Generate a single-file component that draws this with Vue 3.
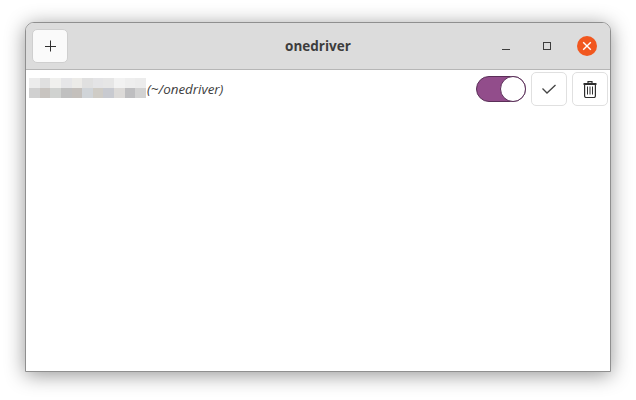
<script setup>
// 打码的账号名，两行色块
const blurTop = ['#ececec', '#e0e0e0', '#f0f0ee', '#e6e6e8', '#ecebe8', '#e0e0e0', '#e4e4e6', '#e6e6e6', '#f2f2f2', '#eeeeee', '#ececec']
const blurBottom = ['#d0d0d0', '#c8c4c0', '#d0d2d0', '#c0c0c0', '#c4c0bc', '#d0d4d8', '#cfccc6', '#c8cad0', '#dcdad8', '#bebec0', '#d2d2d2']
</script>

<template>
  <div class="desktop">
    <div class="window">
      <header class="titlebar">
        <div class="start">
          <button class="btn add-btn" aria-label="Add">
            <svg width="16" height="16" viewBox="0 0 16 16">
              <path d="M8.5 2.5v11M3 8.5h11" stroke="#2e2e2e" stroke-width="1" fill="none" />
            </svg>
          </button>
        </div>
        <div class="title">onedriver</div>
        <div class="controls">
          <span class="ctl">
            <svg width="10" height="10" viewBox="0 0 10 10"><path d="M1 8.5h8" stroke="#3d3d3d" stroke-width="1" /></svg>
          </span>
          <span class="ctl">
            <svg width="10" height="10" viewBox="0 0 10 10"><rect x="1.5" y="1.5" width="7" height="7" fill="none" stroke="#3d3d3d" stroke-width="1" /></svg>
          </span>
          <span class="close">
            <svg width="10" height="10" viewBox="0 0 10 10"><path d="M1.2 1.2l7.6 7.6M8.8 1.2l-7.6 7.6" stroke="#fff" stroke-width="1.4" /></svg>
          </span>
        </div>
      </header>

      <div class="content">
        <div class="row">
          <div class="account">
            <div class="blur">
              <i v-for="(c, i) in blurTop" :key="'t' + i" :style="{ background: c }"></i>
              <i v-for="(c, i) in blurBottom" :key="'b' + i" :style="{ background: c }"></i>
            </div>
            <em class="path">(~/onedriver)</em>
          </div>
          <div class="actions">
            <div class="switch"><span class="knob"></span></div>
            <button class="btn row-btn" aria-label="Mount">
              <svg width="16" height="16" viewBox="0 0 16 16">
                <path d="M1.5 7.5l4.5 4.5 8.5-8" stroke="#444" stroke-width="1.3" fill="none" />
              </svg>
            </button>
            <button class="btn row-btn" aria-label="Delete">
              <svg width="14" height="17" viewBox="0 0 14 17">
                <path d="M5 2.5V0.7h4v1.8" stroke="#2e2e2e" stroke-width="1.2" fill="none" />
                <path d="M0.5 3h13" stroke="#2e2e2e" stroke-width="2" />
                <path d="M1.6 3V15a1.5 1.5 0 0 0 1.5 1.5h7.8a1.5 1.5 0 0 0 1.5-1.5V3" stroke="#2e2e2e" stroke-width="1.2" fill="none" />
                <path d="M4.5 5.5v8M7 5.5v8M9.5 5.5v8" stroke="#2e2e2e" stroke-width="1" />
              </svg>
            </button>
          </div>
        </div>
      </div>
    </div>
  </div>
</template>

<style>
html, body {
  margin: 0;
  background: #fff;
}
</style>

<style scoped>
.desktop {
  width: 636px;
  height: 400px;
  box-sizing: border-box;
  padding: 22px 25px 0;
  overflow: hidden;
  font-family: "Open Sans", "Noto Sans", sans-serif;
  color: #3d3d3d;
}

.window {
  width: 586px;
  height: 350px;
  box-sizing: border-box;
  display: flex;
  flex-direction: column;
  background: #fff;
  border: 1px solid #8f8f8f;
  border-radius: 9px 9px 0 0;
  box-shadow: 0 3px 20px rgba(0, 0, 0, 0.42);
}

.titlebar {
  height: 46px;
  flex: none;
  display: grid;
  grid-template-columns: 1fr auto 1fr;
  align-items: center;
  padding: 0 13px 0 6px;
  background: #dcdcdc;
  border-bottom: 1px solid #b6b6b6;
  border-radius: 8px 8px 0 0;
}

.start {
  display: flex;
}

.title {
  font-size: 13.5px;
  font-weight: 700;
  padding-left: 7px;
}

.controls {
  display: flex;
  align-items: center;
  justify-content: flex-end;
  gap: 19px;
}

.ctl {
  width: 22px;
  height: 20px;
  display: flex;
  align-items: center;
  justify-content: center;
}

.close {
  width: 20px;
  height: 20px;
  border-radius: 50%;
  background: #f1571f;
  display: flex;
  align-items: center;
  justify-content: center;
}

.btn {
  width: 36px;
  height: 34px;
  padding: 0;
  display: flex;
  align-items: center;
  justify-content: center;
  background: #fafafa;
  border: 1px solid #cfcfcf;
  border-radius: 5px;
}

.row-btn {
  background: #fff;
  border-color: #e0e0e0;
}

.content {
  flex: 1;
  background: #fff;
}

.row {
  display: flex;
  align-items: flex-start;
  justify-content: space-between;
  padding: 2px 2px 0 3px;
}

.account {
  display: flex;
  align-items: flex-end;
  margin-top: 6px;
}

.blur {
  width: 117px;
  height: 20px;
  display: grid;
  grid-template-columns: repeat(11, 1fr);
  grid-template-rows: 1fr 1fr;
}

.path {
  font-size: 13.4px;
  line-height: 18px;
  font-style: italic;
  color: #3d3d3d;
  margin-left: 1px;
}

.actions {
  display: flex;
  align-items: center;
  gap: 5px;
}

.switch {
  width: 50px;
  height: 26px;
  box-sizing: border-box;
  border: 1px solid #5a2f58;
  border-radius: 13px;
  background: #924d8b;
  display: flex;
  justify-content: flex-end;
}

.knob {
  width: 26px;
  height: 26px;
  margin: -1px;
  box-sizing: border-box;
  border: 1px solid #5a2f58;
  border-radius: 50%;
  background: #fff;
}
</style>
